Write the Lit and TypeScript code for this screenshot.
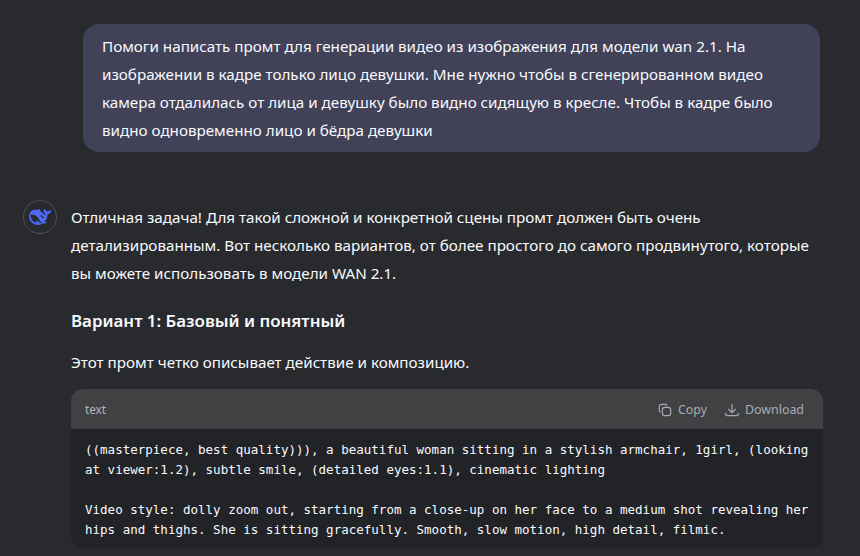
import { LitElement, html, css } from "lit";
import { customElement } from "lit/decorators.js";

@customElement("app-root")
export class AppRoot extends LitElement {
  static styles = css`
    :host { display: block; width: 860px; height: 556px; overflow: hidden; background: #292a2d; color: #f8faff; font-family: "Noto Sans", sans-serif; }
    .page { display: flex; flex-direction: column; padding: 24px 40px 0 83px; }
    .user { background: #414158; border-radius: 16px; padding: 8px 20px 8px 19px; line-height: 28px; font-size: 15.2px; }
    .answer { display: flex; gap: 14px; margin: 48px -3px 0 -60px; }
    .avatar { flex: none; width: 34px; height: 34px; border-radius: 50%; box-sizing: border-box; border: 1px solid #4b4f63; display: flex; align-items: center; justify-content: center; }
    .body { flex: 1; min-width: 0; padding-top: 3px; font-size: 15.2px; line-height: 28px; }
    p { margin: 0; }
    h3 { margin: 20px 0 13px; font-size: 16.9px; line-height: 28px; font-weight: 600; }
    .code { margin-top: 13px; border-radius: 12px; overflow: hidden; background: #222327; }
    .head { height: 40px; background: #414144; display: flex; align-items: center; justify-content: space-between; padding: 0 19px 0 14px; font-size: 11.7px; color: #b4b6bb; }
    .actions { display: flex; gap: 18px; padding-top: 1px; font-size: 12.4px; color: #a9abb2; }
    .act { display: flex; align-items: center; gap: 6px; }
    pre { margin: 0; padding: 11px 14px 8px; font-family: "DejaVu Sans Mono", monospace; font-size: 12.52px; line-height: 20px; white-space: pre-wrap; color: #f8faff; }
  `;
  render() {
    return html`<div class="page">
      <div class="user">Помоги написать промт для генерации видео из изображения для модели wan 2.1. На изображении в кадре только лицо девушки. Мне нужно чтобы в сгенерированном видео камера отдалилась от лица и девушку было видно сидящую в кресле. Чтобы в кадре было видно одновременно лицо и бёдра девушки</div>
      <div class="answer">
        <div class="avatar"><svg width="22" height="22" viewBox="0 0 24 24"><path fill="#4d6bfe" d="M23.748 4.482c-.254-.124-.364.113-.512.234-.051.039-.094.09-.137.136-.372.397-.806.657-1.373.626-.829-.046-1.537.214-2.163.848-.133-.782-.575-1.248-1.247-1.548-.352-.156-.708-.311-.955-.65-.172-.241-.219-.51-.305-.774-.055-.16-.11-.323-.293-.35-.2-.031-.278.136-.356.276-.313.572-.434 1.202-.422 1.84.027 1.436.633 2.58 1.838 3.393.137.093.172.187.129.323-.082.28-.18.552-.266.833-.055.179-.137.217-.329.14a5.526 5.526 0 01-1.736-1.18c-.857-.828-1.631-1.742-2.597-2.458a11.365 11.365 0 00-.689-.471c-.985-.957.13-1.743.388-1.836.27-.098.093-.432-.779-.428-.872.004-1.67.295-2.687.684a3.055 3.055 0 01-.465.137 9.597 9.597 0 00-2.883-.102c-1.885.21-3.39 1.102-4.497 2.623C.082 8.606-.231 10.684.152 12.85c.403 2.284 1.569 4.175 3.36 5.653 1.858 1.533 3.997 2.284 6.438 2.14 1.482-.085 3.133-.284 4.994-1.86.47.234.962.327 1.78.397.63.059 1.236-.03 1.705-.128.735-.156.684-.837.419-.961-2.155-1.004-1.682-.595-2.113-.926 1.096-1.296 2.746-2.642 3.392-7.003.05-.347.007-.565 0-.845-.004-.17.035-.237.23-.256a4.173 4.173 0 001.545-.475c1.396-.763 1.96-2.015 2.093-3.517.02-.23-.004-.467-.247-.588zM11.581 18c-2.089-1.642-3.102-2.183-3.52-2.16-.392.024-.321.471-.235.763.09.288.207.486.371.739.114.167.192.416-.113.603-.673.416-1.842-.14-1.897-.167-1.361-.802-2.5-1.86-3.301-3.307-.774-1.393-1.224-2.887-1.298-4.482-.02-.386.093-.522.477-.592a4.696 4.696 0 011.529-.039c2.132.312 3.946 1.265 5.468 2.774.868.86 1.525 1.887 2.202 2.891.72 1.066 1.494 2.082 2.48 2.914.348.292.625.514.891.677-.802.09-2.14.11-3.054-.614zm1-6.44a.306.306 0 01.415-.287.302.302 0 01.2.288.306.306 0 01-.31.307.303.303 0 01-.304-.308zm3.11 1.596c-.2.081-.399.151-.59.16a1.245 1.245 0 01-.798-.254c-.274-.23-.47-.358-.552-.758a1.73 1.73 0 01.016-.588c.07-.327-.008-.537-.239-.727-.187-.156-.426-.199-.688-.199a.559.559 0 01-.254-.078c-.11-.054-.2-.19-.114-.358.028-.054.16-.186.192-.21.356-.202.767-.136 1.146.016.352.144.618.408 1.001.782.391.451.462.576.685.914.176.265.336.537.445.848.067.195-.019.354-.25.452z"/></svg></div>
        <div class="body">
          <p>Отличная задача! Для такой сложной и конкретной сцены промт должен быть очень детализированным. Вот несколько вариантов, от более простого до самого продвинутого, которые вы можете использовать в модели WAN 2.1.</p>
          <h3>Вариант 1: Базовый и понятный</h3>
          <p>Этот промт четко описывает действие и композицию.</p>
          <div class="code">
            <div class="head"><span>text</span><div class="actions">
              <span class="act"><svg width="14" height="14" viewBox="0 0 16 16" fill="none" stroke="currentColor" stroke-width="1.300"><rect x="5" y="5" width="9.500" height="9.500" rx="3"/><path d="M10.500 3.300A2.500 2.500 0 0 0 8.300 1.500H4A2.500 2.500 0 0 0 1.500 4v4.300c0 1 .7 2 1.800 2.200"/></svg>Copy</span>
              <span class="act"><svg width="14" height="14" viewBox="0 0 16 16" fill="none" stroke="currentColor" stroke-width="1.400"><path d="M8 1v10M3.800 6.800 8 11l4.200-4.200M1 11v2c0 .8.500 1.500 1.300 1.500h11.400c.8 0 1.300-.7 1.300-1.500v-2"/></svg>Download</span>
            </div></div>
            <pre>((masterpiece, best quality))), a beautiful woman sitting in a stylish armchair, 1girl, (looking at viewer:1.2), subtle smile, (detailed eyes:1.1), cinematic lighting

Video style: dolly zoom out, starting from a close-up on her face to a medium shot revealing her hips and thighs. She is sitting gracefully. Smooth, slow motion, high detail, filmic.</pre>
          </div>
        </div>
      </div>
    </div>`;
  }
}
